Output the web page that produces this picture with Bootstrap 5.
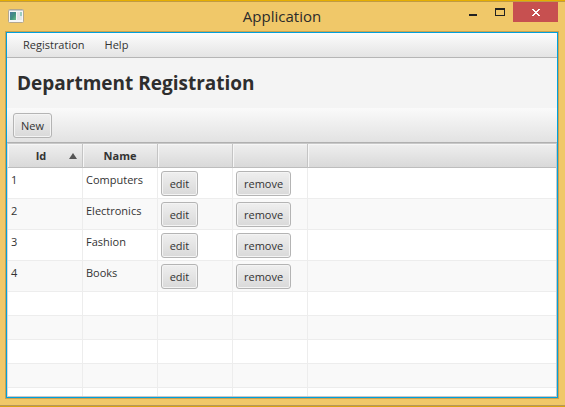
<!DOCTYPE html>
<html lang="en">
<head>
<meta charset="utf-8">
<meta name="viewport" content="width=device-width, initial-scale=1">
<title>Application</title>
<link href="https://cdn.jsdelivr.net/npm/bootstrap@5.3.0/dist/css/bootstrap.min.css" rel="stylesheet">
<style>
  body {
    font-family: "Open Sans", "Noto Sans", sans-serif;
    font-size: 11px;
    line-height: 16px;
    color: #333;
    background: #f0c869;
    border-top: 1px solid #e6ae00;
    border-bottom: 1px solid #d9a313;
  }
  .app-window {
    border-top: 1px solid #c09b45;
    border-bottom: 1px solid #b8975a;
    padding: 0 7px 7px 6px;
  }
  .title-bar { height: 30px; }
  .title-side { flex: 1 1 0; }
  .app-icon { margin: 7px 0 0 2px; }
  .title-text { font-size: 15px; line-height: 28px; color: #2b2b2b; }
  .win-btn { border: 0; padding: 0; background: transparent; width: 27px; height: 20px; }
  .win-close { width: 45px; background: #c75050; }
  .win-btn svg, .app-icon { display: block; }
  .client {
    border: 1px solid #00a0dc;
    outline: 1px solid #c9a250;
    background: #f4f4f4;
    min-height: 0;
  }
  .menu-strip {
    height: 25px;
    padding-left: 6px;
    background: linear-gradient(#fcfcfc, #e4e4e4);
    border-bottom: 1px solid #b5b5b5;
  }
  .menu-strip .nav-link { color: #333; padding: 4px 10px; }
  .page-heading { font-size: 19px; line-height: 50px; font-weight: 700; padding-left: 10px; color: #2e2e2e; }
  .tool-strip {
    padding: 5px 6px 4px;
    background: linear-gradient(#fafafa, #e2e2e2);
    border-bottom: 1px solid #b0b0b0;
  }
  .fx-btn {
    display: block;
    min-width: 37px;
    font-size: 11px;
    line-height: 17px;
    padding: 3px 7px;
    color: #333;
    border: 1px solid #b4b4b4;
    border-radius: 3px;
    background: linear-gradient(#efefef, #d9d9d9);
    box-shadow: inset 0 0 0 1px #f4f4f4;
  }
  .grid-frame { border: 1px solid #c8c8c8; border-left: 1px solid #d8d8d8; background: #fff; min-height: 0; }
  .grid { width: 100%; table-layout: fixed; border-collapse: separate; border-spacing: 0; }
  .grid .fixed { width: 75px; }
  .grid th {
    height: 24px;
    padding: 0 5px;
    text-align: center;
    font-size: 11px;
    border-right: 1px solid #c4c4c4;
    border-bottom: 1px solid #bdbdbd;
    background: linear-gradient(#efefef, #d9d9d9);
    box-shadow: inset 1px 1px 0 #f6f6f6;
  }
  .grid td {
    height: 24px;
    padding: 0 3px;
    vertical-align: top;
    border-right: 1px solid #ededed;
    border-bottom: 1px solid #ededed;
  }
  .grid tr > :last-child { border-right: 0; }
  .grid .filled td { height: 31px; padding-top: 4px; }
  .grid .filled .action { padding-top: 3px; }
  .grid tbody tr:nth-child(even) { background: #f9f9f9; }
</style>
<script src="https://cdn.jsdelivr.net/npm/bootstrap@5.3.0/dist/js/bootstrap.bundle.min.js"></script>
</head>
<body class="vh-100 overflow-hidden d-flex flex-column">
<div class="app-window flex-grow-1 d-flex flex-column overflow-hidden">
  <header class="title-bar d-flex flex-shrink-0 align-items-start">
    <div class="title-side">
      <svg class="app-icon" width="16" height="14" viewBox="0 0 16 14" aria-hidden="true">
        <defs>
          <linearGradient id="pane" x1="0" y1="0" x2="1" y2="1">
            <stop offset="0" stop-color="#4a79a0"/><stop offset=".55" stop-color="#41917f"/><stop offset="1" stop-color="#6fbf8c"/>
          </linearGradient>
        </defs>
        <rect x=".5" y=".5" width="15" height="13" rx="1" fill="#f7f7f7" stroke="#b3a78e"/>
        <rect x="1" y="1" width="14" height="1" fill="#c5cbd3"/>
        <rect x="2" y="3" width="6" height="8" fill="url(#pane)"/>
        <rect x="9" y="3" width="3" height="8" fill="#e3e3e6"/>
        <rect x="12" y="3" width="2" height="4" fill="#9ccdc0"/>
        <rect x="12" y="7" width="2" height="4" fill="#e3e9ea"/>
      </svg>
    </div>
    <div class="title-text">Application</div>
    <div class="title-side d-flex justify-content-end">
      <button type="button" class="win-btn" aria-label="Minimize">
        <svg width="27" height="20" aria-hidden="true"><rect x="10" y="12" width="8" height="2" fill="#222"/></svg>
      </button>
      <button type="button" class="win-btn" aria-label="Maximize">
        <svg width="27" height="20" aria-hidden="true"><path fill="#222" fill-rule="evenodd" d="M9 6h10v8H9zM10 8v5h8V8z"/></svg>
      </button>
      <button type="button" class="win-btn win-close" aria-label="Close">
        <svg width="45" height="20" aria-hidden="true"><path fill="#fff" shape-rendering="crispEdges" d="M19 7h2v1h1v1h2V8h1V7h2v1h-1v1h-1v1h-1v1h1v1h1v1h1v1h-2v-1h-1v-1h-2v1h-1v1h-2v-1h1v-1h1v-1h1v-1h-1V9h-1V8h-1z"/></svg>
      </button>
    </div>
  </header>

  <main class="client flex-grow-1 d-flex flex-column overflow-hidden">
    <nav class="menu-strip nav flex-shrink-0 align-items-center">
      <a class="nav-link" href="#registration">Registration</a>
      <a class="nav-link" href="#help">Help</a>
    </nav>
    <h1 class="page-heading m-0 flex-shrink-0">Department Registration</h1>
    <div class="tool-strip d-flex flex-shrink-0">
      <button type="button" class="fx-btn">New</button>
    </div>
    <div class="grid-frame flex-grow-1 overflow-hidden">
      <table class="grid">
        <colgroup><col class="fixed"><col class="fixed"><col class="fixed"><col class="fixed"><col></colgroup>
        <thead>
          <tr>
            <th scope="col" aria-sort="ascending">
              <div class="d-flex align-items-center">
                <span class="flex-grow-1">Id</span>
                <svg width="8" height="6" viewBox="0 0 8 6" aria-hidden="true"><path fill="#555" d="M4 0l4 6H0z"/></svg>
              </div>
            </th>
            <th scope="col">Name</th>
            <th></th><th></th><th></th>
          </tr>
        </thead>
        <tbody>
          <tr class="filled"><td>1</td><td>Computers</td><td class="action"><button type="button" class="fx-btn">edit</button></td><td class="action"><button type="button" class="fx-btn">remove</button></td><td></td></tr>
          <tr class="filled"><td>2</td><td>Electronics</td><td class="action"><button type="button" class="fx-btn">edit</button></td><td class="action"><button type="button" class="fx-btn">remove</button></td><td></td></tr>
          <tr class="filled"><td>3</td><td>Fashion</td><td class="action"><button type="button" class="fx-btn">edit</button></td><td class="action"><button type="button" class="fx-btn">remove</button></td><td></td></tr>
          <tr class="filled"><td>4</td><td>Books</td><td class="action"><button type="button" class="fx-btn">edit</button></td><td class="action"><button type="button" class="fx-btn">remove</button></td><td></td></tr>
          <tr><td></td><td></td><td></td><td></td><td></td></tr>
          <tr><td></td><td></td><td></td><td></td><td></td></tr>
          <tr><td></td><td></td><td></td><td></td><td></td></tr>
          <tr><td></td><td></td><td></td><td></td><td></td></tr>
          <tr><td></td><td></td><td></td><td></td><td></td></tr>
        </tbody>
      </table>
    </div>
  </main>
</div>
</body>
</html>
